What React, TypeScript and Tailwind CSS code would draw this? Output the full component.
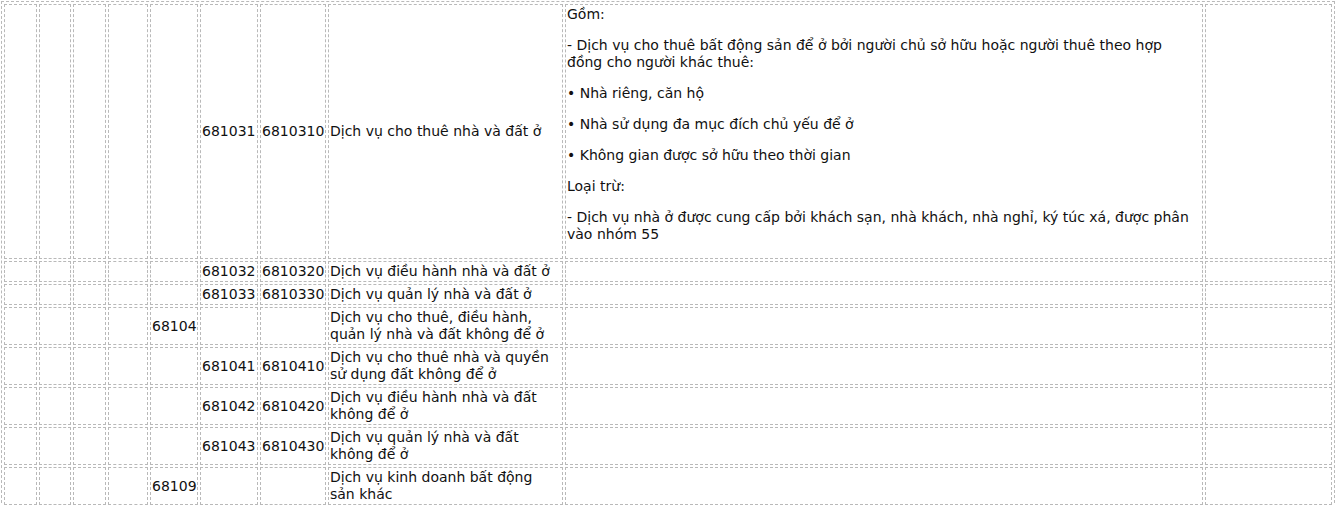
const cell = "border border-dashed border-[#b9b9b9] p-px align-middle";

type Row = {
  lv5?: string;
  lv6?: string;
  code?: string;
  name: string;
};

const rows: Row[] = [
  { lv6: "681032", code: "6810320", name: "Dịch vụ điều hành nhà và đất ở" },
  { lv6: "681033", code: "6810330", name: "Dịch vụ quản lý nhà và đất ở" },
  { lv5: "68104", name: "Dịch vụ cho thuê, điều hành, quản lý nhà và đất không để ở" },
  { lv6: "681041", code: "6810410", name: "Dịch vụ cho thuê nhà và quyền sử dụng đất không để ở" },
  { lv6: "681042", code: "6810420", name: "Dịch vụ điều hành nhà và đất không để ở" },
  { lv6: "681043", code: "6810430", name: "Dịch vụ quản lý nhà và đất không để ở" },
  { lv5: "68109", name: "Dịch vụ kinh doanh bất động sản khác" },
];

export default function App() {
  return (
    <div className="bg-white pl-px pt-px font-['DejaVu_Sans',Verdana,sans-serif] text-[14px] leading-[17px] text-[#111]">
      <table className="w-[1334px] table-fixed border-separate border-spacing-[2px] border border-dashed border-[#b9b9b9]">
        <tbody>
          {/* first row sets column widths */}
          <tr>
            <td className={`${cell} w-[33px]`}></td>
            <td className={`${cell} w-[32px]`}></td>
            <td className={`${cell} w-[33px]`}></td>
            <td className={`${cell} w-[40px]`}></td>
            <td className={`${cell} w-[48px]`}></td>
            <td className={`${cell} w-[58px]`}>681031</td>
            <td className={`${cell} w-[66px]`}>6810310</td>
            <td className={`${cell} w-[235px]`}>Dịch vụ cho thuê nhà và đất ở</td>
            <td className={`${cell} w-[638px]`}>
              <p>Gồm:</p>
              <p className="mt-[14px]">
                - Dịch vụ cho thuê bất động sản để ở bởi người chủ sở hữu hoặc người thuê theo hợp đồng cho người khác thuê:
              </p>
              <p className="mt-[14px]">• Nhà riêng, căn hộ</p>
              <p className="mt-[14px]">• Nhà sử dụng đa mục đích chủ yếu để ở</p>
              <p className="mt-[14px]">• Không gian được sở hữu theo thời gian</p>
              <p className="mt-[14px]">Loại trừ:</p>
              <p className="my-[14px]">
                - Dịch vụ nhà ở được cung cấp bởi khách sạn, nhà khách, nhà nghỉ, ký túc xá, được phân vào nhóm 55
              </p>
            </td>
            <td className={`${cell} w-[127px]`}></td>
          </tr>
          {rows.map((r, i) => (
            <tr key={i}>
              <td className={cell}></td>
              <td className={cell}></td>
              <td className={cell}></td>
              <td className={cell}></td>
              <td className={cell}>{r.lv5}</td>
              <td className={cell}>{r.lv6}</td>
              <td className={cell}>{r.code}</td>
              <td className={cell}>{r.name}</td>
              <td className={cell}></td>
              <td className={cell}></td>
            </tr>
          ))}
        </tbody>
      </table>
    </div>
  );
}
